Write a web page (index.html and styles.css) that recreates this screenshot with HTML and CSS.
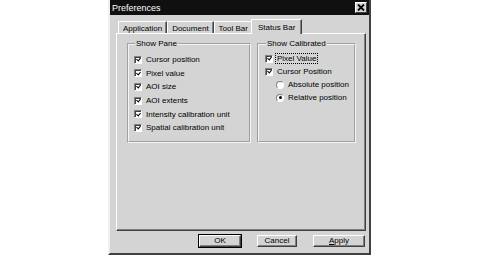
FILE: index.html
```html
<!DOCTYPE html>
<html lang="en">
<head>
    <meta charset="UTF-8">
    <title>Preferences</title>
    <link rel="stylesheet" href="styles.css">
</head>
<body>

<div class="window">
    <!-- Title bar -->
    <div class="titlebar">
        <span class="title">Preferences</span>
        <span class="close">
            <svg width="8" height="7" viewBox="0 0 8 7"><path d="M1 0.5 L7 6.5 M7 0.5 L1 6.5" stroke="#000" stroke-width="1.8" fill="none"/></svg>
        </span>
    </div>

    <div class="content">
        <!-- Tabs -->
        <div class="tabs">
            <div class="tab">Application</div>
            <div class="tab">Document</div>
            <div class="tab">Tool Bar</div>
            <div class="tab active">Status Bar</div>
        </div>

        <!-- Status Bar page -->
        <div class="page">
            <fieldset class="group pane">
                <legend>Show Pane</legend>
                <div class="row"><span class="check on"></span><span class="label">Cursor position</span></div>
                <div class="row"><span class="check on"></span><span class="label">Pixel value</span></div>
                <div class="row"><span class="check on"></span><span class="label">AOI size</span></div>
                <div class="row"><span class="check on"></span><span class="label">AOI extents</span></div>
                <div class="row"><span class="check on"></span><span class="label">Intensity calibration unit</span></div>
                <div class="row"><span class="check on"></span><span class="label">Spatial calibration unit</span></div>
            </fieldset>
            <fieldset class="group calib">
                <legend>Show Calibrated</legend>
                <div class="row"><span class="check on"></span><span class="label focus">Pixel Value</span></div>
                <div class="row"><span class="check on"></span><span class="label">Cursor Position</span></div>
                <div class="row sub"><span class="radio"></span><span class="label">Absolute position</span></div>
                <div class="row sub"><span class="radio on"></span><span class="label">Relative position</span></div>
            </fieldset>
        </div>

        <!-- Dialog buttons -->
        <div class="buttons">
            <button class="btn ok">OK</button>
            <button class="btn cancel">Cancel</button>
            <button class="btn apply"><u>A</u>pply</button>
        </div>
    </div>
</div>

</body>
</html>
```

FILE: styles.css
```css
body {
    margin: 0;
    background-color: #fff;
    font-family: "Liberation Sans", Arial, sans-serif;
    font-size: 8px;
    color: #000;
}
.window {
    margin-left: 108px;
    width: 263px;
    height: 255px;
    box-sizing: border-box;
    background-color: #d4d4d4;
    border-left: 2px solid #f0f0f0;
    border-right: 2px solid #404040;
    border-bottom: 2px solid #404040;
}
.titlebar {
    height: 15px;
    background-color: #101010;
    color: #fff;
    display: flex;
    align-items: center;
    justify-content: space-between;
    padding: 0 2px 0 2px;
    font-size: 9px;
}
.close {
    width: 10px;
    height: 9px;
    background-color: #d4d4d4;
    border: 1px solid;
    border-color: #fff #404040 #404040 #fff;
    display: flex;
    align-items: center;
    justify-content: center;
}
.content {
    padding: 0 3px 0 6px;
}
.tabs {
    display: flex;
    align-items: flex-end;
    height: 18px;
    box-sizing: border-box;
    padding: 4px 0 0 2px;
    position: relative;
    z-index: 1;
}
.tab {
    height: 12px;
    box-sizing: border-box;
    padding: 2px 4px 0 4px;
    line-height: 10px;
    border-top: 1px solid #fff;
    border-left: 1px solid #fff;
    border-right: 1px solid #404040;
    box-shadow: inset -1px 0 0 #808080;
    white-space: nowrap;
}
.tab.active {
    height: 15px;
    margin: 0 -2px -1px -2px;
    padding: 3px 6px 0 6px;
    background-color: #d4d4d4;
}
.page {
    height: 198px;
    box-sizing: border-box;
    border: 1px solid;
    border-color: #fff #404040 #404040 #fff;
    box-shadow: inset -1px -1px 0 #808080;
    padding: 5px 0 0 10px;
    display: flex;
    align-items: flex-start;
    gap: 6px;
}
.group {
    margin: 0;
    min-width: 0;
    box-sizing: border-box;
    border: 2px groove #f4f4f4;
    padding: 4px 0 0 5px;
}
.group legend {
    padding: 0 1px;
    margin-left: 1px;
    line-height: 10px;
}
.pane {
    width: 124px;
    height: 104px;
}
.calib {
    width: 99px;
    height: 104px;
    padding-top: 3px;
    padding-left: 6px;
}
.row {
    display: flex;
    align-items: center;
    height: 13.6px;
}
.calib .row {
    height: 13px;
}
.row.sub {
    padding-left: 11px;
}
.label {
    margin-left: 4px;
    white-space: nowrap;
}
.label.focus {
    outline: 1px dotted #000;
    outline-offset: 0;
    margin-left: 3px;
    padding: 0 1px;
}
.check {
    width: 8px;
    height: 8px;
    box-sizing: border-box;
    background-color: #fff;
    border: 1px solid;
    border-color: #808080 #fff #fff #808080;
    box-shadow: inset 1px 1px 0 #404040;
    display: flex;
    align-items: center;
    justify-content: center;
}
.check svg {
    display: block;
}
.check.on::after {
    content: "";
    width: 2px;
    height: 3px;
    margin-top: -1px;
    border: solid #000;
    border-width: 0 1.5px 1.5px 0;
    transform: rotate(40deg);
}
.radio {
    width: 8px;
    height: 8px;
    box-sizing: border-box;
    border-radius: 50%;
    background-color: #fff;
    border: 1px solid;
    border-color: #808080 #fff #fff #808080;
    display: flex;
    align-items: center;
    justify-content: center;
}
.radio.on::after {
    content: "";
    width: 3px;
    height: 3px;
    border-radius: 50%;
    background-color: #000;
}
.buttons {
    display: flex;
    justify-content: flex-end;
    gap: 16px;
    margin-top: 4px;
    padding-right: 1px;
}
.btn {
    height: 12px;
    box-sizing: border-box;
    padding: 0;
    font-family: inherit;
    font-size: 8px;
    line-height: 10px;
    background-color: #d4d4d4;
    color: #000;
    border: 1px solid;
    border-color: #fff #404040 #404040 #fff;
    box-shadow: inset -1px -1px 0 #808080;
    border-radius: 0;
}
.btn.ok {
    width: 42px;
    outline: 1px solid #000;
    outline-offset: 0;
}
.btn.cancel {
    width: 40px;
}
.btn.apply {
    width: 52px;
}
```
